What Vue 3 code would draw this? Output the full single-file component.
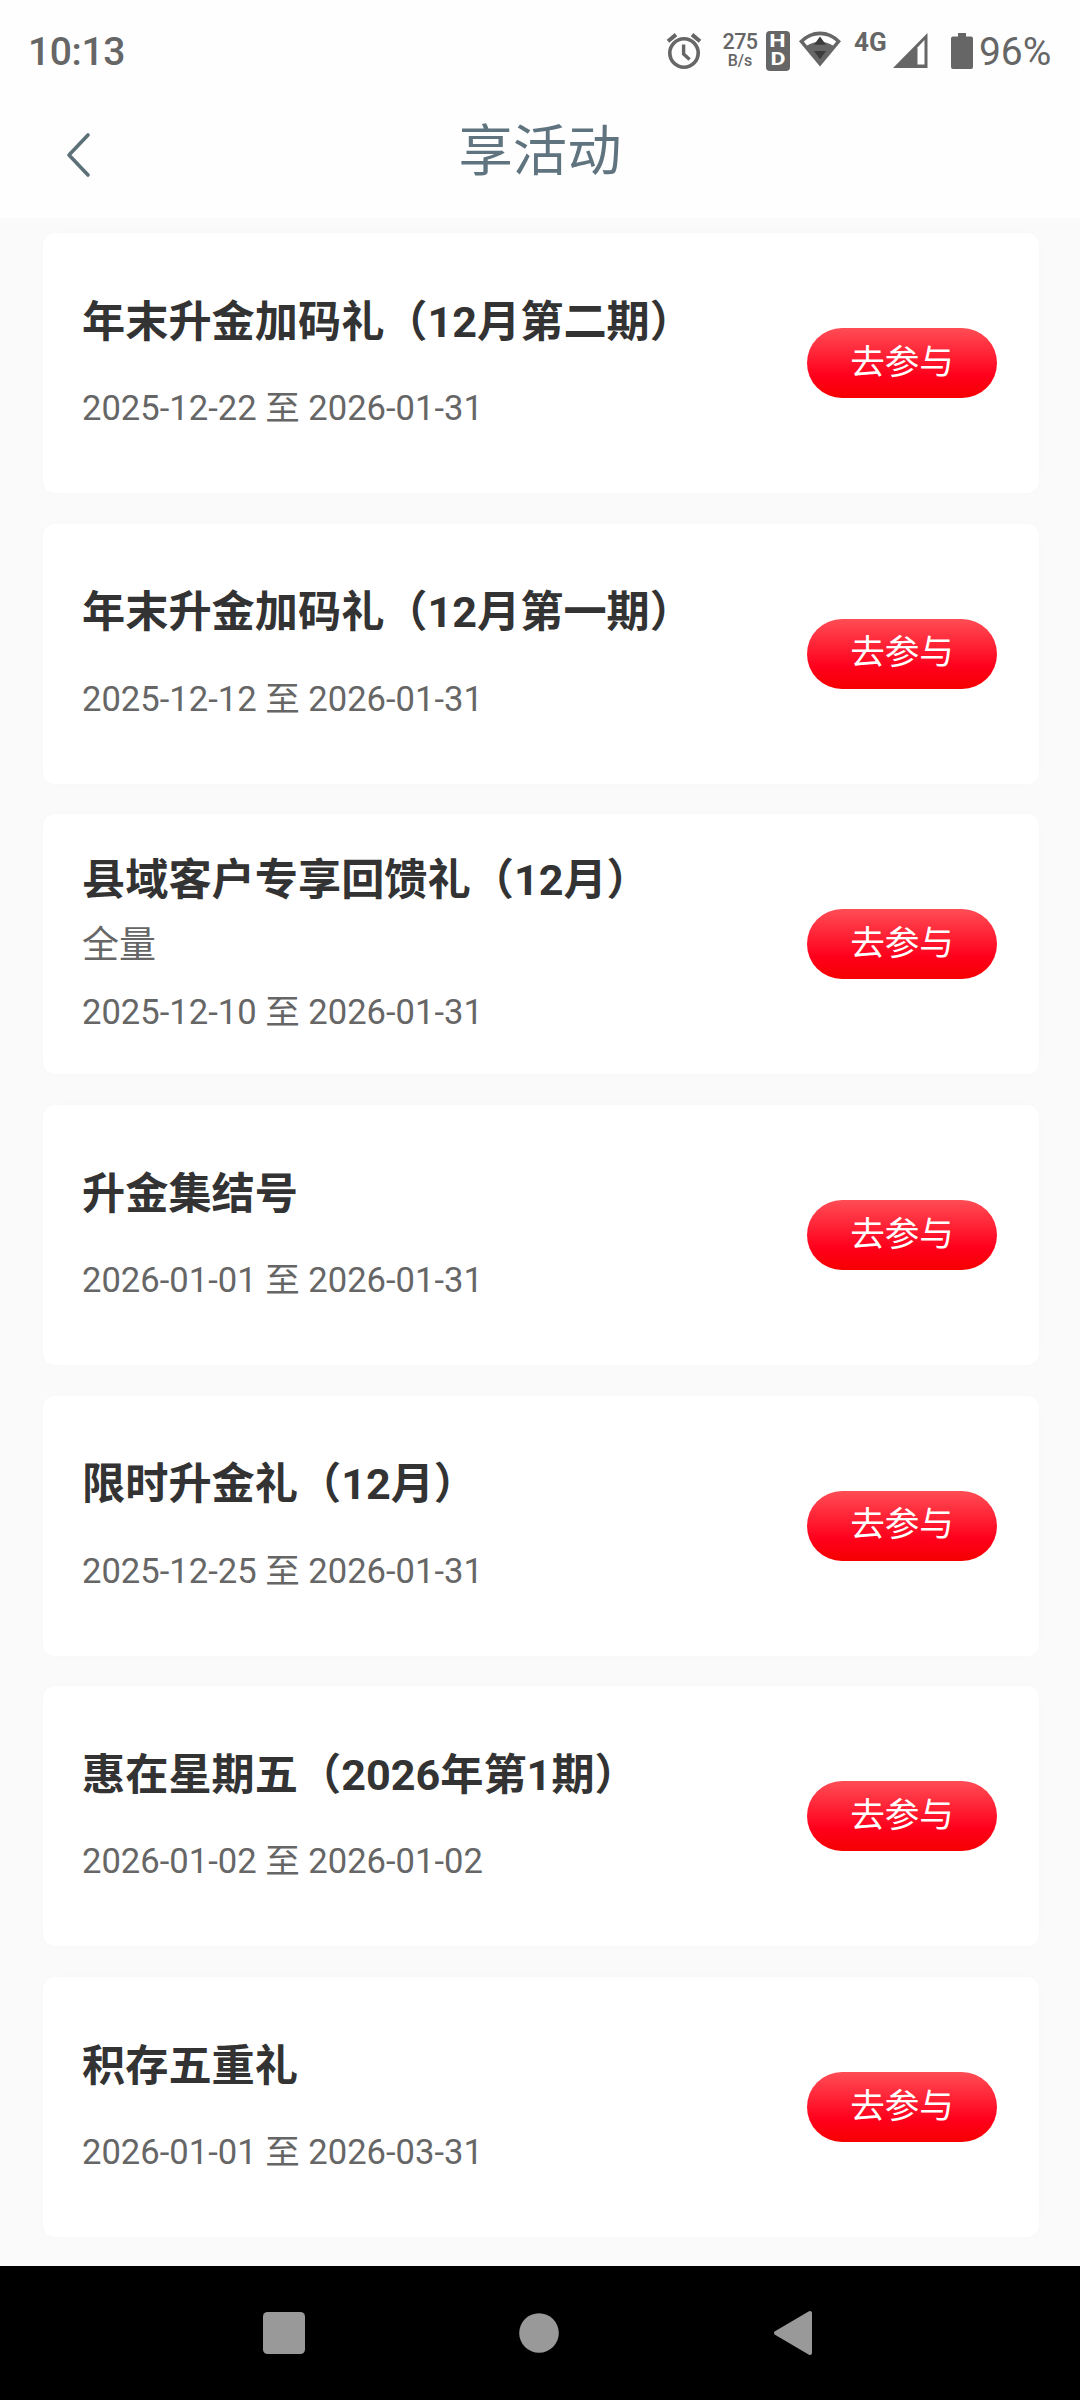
<script setup>
const activities = [
  { title: '年末升金加码礼（12月第二期）', period: '2025-12-22 至 2026-01-31' },
  { title: '年末升金加码礼（12月第一期）', period: '2025-12-12 至 2026-01-31' },
  { title: '县域客户专享回馈礼（12月）', note: '全量', period: '2025-12-10 至 2026-01-31' },
  { title: '升金集结号', period: '2026-01-01 至 2026-01-31' },
  { title: '限时升金礼（12月）', period: '2025-12-25 至 2026-01-31' },
  { title: '惠在星期五（2026年第1期）', period: '2026-01-02 至 2026-01-02' },
  { title: '积存五重礼', period: '2026-01-01 至 2026-03-31' },
]
</script>

<template>
  <div class="screen">
    <header class="top">
      <div class="status">
        <span class="clock">10:13</span>
        <svg class="alarm" width="36" height="38" viewBox="0 0 36 38" fill="none" stroke="#666">
          <circle cx="18" cy="21" r="14.2" stroke-width="3.6" />
          <path d="M17.6 12.5V22l6 5.4" stroke-width="3.4" />
          <path d="M2 9.2l8-6.6M34 9.2l-8-6.6" stroke-width="4" />
        </svg>
        <div class="speed"><span class="rate">275</span><span class="unit">B/s</span></div>
        <div class="hd"><span>H</span><span>D</span></div>
        <svg class="wifi" width="42" height="36" viewBox="0 0 42 36">
          <path d="M21 35.500L0 10.200Q9.500 0.500 21 0.500T42 10.200Z" fill="#666" />
          <path d="M4.800 10.600Q12 4.200 21 4.200T37.200 10.600L34 14.600Q28 10.800 21 10.800T8 14.600Z" fill="#fff" />
          <path d="M21 5.500l6 8.200H15zM15 20h12l-6 8.200z" fill="#3c3c3c" />
        </svg>
        <span class="net">4G</span>
        <svg class="signal" width="35" height="35" viewBox="0 0 35 35">
          <path d="M34.500 0v35H0z" fill="#666" />
          <path d="M24.500 14.500L31.500 7v24.500h-7z" fill="#fff" />
        </svg>
        <svg class="battery" width="22" height="36" viewBox="0 0 22 36">
          <path d="M7 0h8v3.500h5a2 2 0 0 1 2 2V34a2 2 0 0 1-2 2H2a2 2 0 0 1-2-2V5.500a2 2 0 0 1 2-2h5z" fill="#666" />
        </svg>
        <span class="percent">96%</span>
      </div>
      <div class="titlebar">
        <svg class="back" width="26" height="46" viewBox="0 0 26 46" fill="none" stroke="#5c7078" stroke-width="3.600" stroke-linecap="round" stroke-linejoin="round">
          <path d="M23 3L4 23l19 20" />
        </svg>
        <h1>享活动</h1>
      </div>
    </header>

    <main class="list">
      <section v-for="item in activities" :key="item.title" class="card">
        <div class="info">
          <h2>{{ item.title }}</h2>
          <p v-if="item.note" class="note">{{ item.note }}</p>
          <p class="period">{{ item.period }}</p>
        </div>
        <button class="join">去参与</button>
      </section>
    </main>

    <nav class="nav">
      <svg width="42" height="42" viewBox="0 0 42 42"><rect width="42" height="42" rx="4.500" fill="#999" /></svg>
      <svg width="40" height="40" viewBox="0 0 40 40"><circle cx="20" cy="20" r="19.800" fill="#999" /></svg>
      <svg width="40" height="46" viewBox="0 0 40 46"><path d="M3 23L37 3v40z" fill="#999" stroke="#999" stroke-width="4" stroke-linejoin="round" /></svg>
    </nav>
  </div>
</template>

<style>
body {
  margin: 0;
}
</style>

<style scoped>
.screen {
  width: 1080px;
  height: 2400px;
  display: flex;
  flex-direction: column;
  overflow: hidden;
  background: #fafafa;
  font-family: Roboto, "Noto Sans CJK SC", sans-serif;
}
h1, h2, p {
  margin: 0;
  font-weight: 400;
}
.top {
  flex: none;
  height: 218px;
  background: #fefefe;
}
.status {
  height: 101px;
  display: flex;
  align-items: center;
  color: #666;
  line-height: 1;
}
.clock {
  box-sizing: border-box;
  width: 667px;
  padding-left: 28px;
  font-size: 39px;
  font-weight: 500;
  letter-spacing: -0.4px;
  padding-top: 3px;
}
.alarm {
  flex: none;
  margin-right: 20px;
  margin-left: -1px;
}
.speed {
  width: 36px;
  display: flex;
  flex-direction: column;
  align-items: center;
  margin-right: 8px;
  font-weight: 500;
}
.rate {
  font-size: 21.5px;
  line-height: 20px;
  letter-spacing: -0.5px;
}
.unit {
  font-size: 16px;
  line-height: 18px;
}
.hd {
  width: 24px;
  height: 40px;
  border-radius: 4px;
  background: #666;
  color: #fff;
  font-weight: 700;
  font-size: 18.5px;
  display: flex;
  flex-direction: column;
  align-items: center;
  justify-content: center;
  gap: 3px;
  margin-right: 9px;
}
.hd span {
  line-height: 15px;
  transform: scaleX(1.25);
}
.wifi {
  flex: none;
  margin-right: 13px;
  margin-top: -3px;
}
.net {
  width: 39px;
  font-size: 26px;
  font-weight: 700;
  margin-top: -17px;
}
.signal {
  flex: none;
  margin-right: 23px;
  margin-top: -1px;
}
.battery {
  flex: none;
  margin-right: 6px;
}
.percent {
  font-size: 39px;
  letter-spacing: -0.1px;
  padding-top: 3px;
}
.titlebar {
  height: 102px;
  display: flex;
  align-items: center;
  justify-content: center;
  position: relative;
}
.back {
  position: absolute;
  left: 65px;
  top: 31px;
}
h1 {
  font-size: 54.300px;
  line-height: 80px;
  color: #607480;
}
.list {
  flex: 1;
  display: flex;
  flex-direction: column;
  gap: 30.7px;
  padding: 15px 41px 0 43px;
}
.card {
  flex: none;
  box-sizing: border-box;
  height: 260px;
  display: flex;
  align-items: center;
  justify-content: space-between;
  padding: 0 42px 0 39px;
  border-radius: 12px;
  background: #fff;
  box-shadow: 0 0 14px rgba(0, 0, 0, 0.012);
}
.info {
  display: flex;
  flex-direction: column;
  padding-bottom: 5.500px;
}
h2 {
  font-size: 43.2px;
  line-height: 60px;
  font-weight: 700;
  color: #333;
  margin-bottom: 12px;
}
.note {
  font-size: 37px;
  line-height: 45px;
  color: #666;
}
.period {
  font-size: 34.6px;
  line-height: 40px;
  margin-top: 23.500px;
  color: #666;
}
.join {
  width: 190px;
  height: 70px;
  padding: 0 0 2px;
  border: 0;
  border-radius: 35px;
  background: linear-gradient(#ff4d55, #ff001c 68%, #f60000);
  color: #fff;
  font: 400 34.6px/1 Roboto, "Noto Sans CJK SC", sans-serif;
}
.nav {
  flex: none;
  height: 134px;
  box-sizing: border-box;
  display: flex;
  align-items: center;
  justify-content: space-between;
  padding: 0 267px 0 263px;
  background: #000;
}
</style>
